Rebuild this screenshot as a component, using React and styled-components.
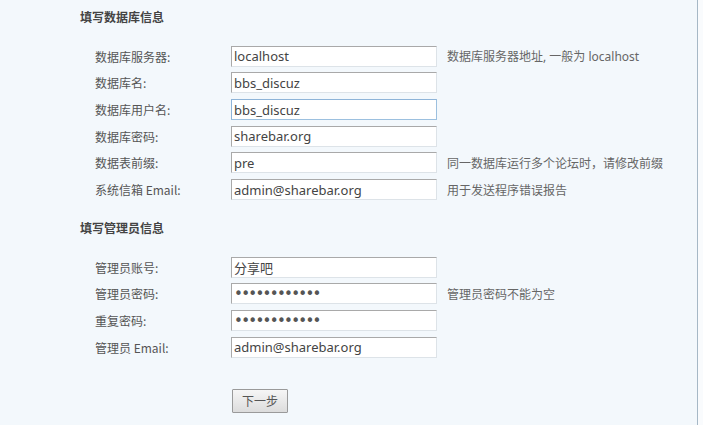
import React from 'react'
import styled, { createGlobalStyle } from 'styled-components'

const Global = createGlobalStyle`
  html, body {
    margin: 0;
    padding: 0;
    background: #f9fbfd;
  }
  body {
    font-family: "Noto Sans", "Noto Sans CJK SC", sans-serif;
    font-size: 12px;
    color: #555;
  }
`

const Page = styled.div`
  width: 698px;
  height: 425px;
  background: #f3f8fc;
  border-right: 1px solid #a6b8c6;
  box-sizing: border-box;
  padding-top: 8px;
`

const Title = styled.h3`
  margin: ${props => props.first ? '0' : '16px'} 0 0 80px;
  font-size: 12px;
  line-height: 20px;
  font-weight: bold;
  color: #444;
`

const Form = styled.div`
  display: grid;
  grid-template-columns: 126px 206px auto;
  grid-auto-rows: 26.67px;
  column-gap: 10px;
  align-items: center;
  padding-left: 95px;
  margin-top: 15px;
`

const Label = styled.label`
  font-family: "Noto Sans CJK SC", sans-serif;
  font-size: 12px;
  color: #555;
  white-space: nowrap;
`

const Input = styled.input`
  box-sizing: border-box;
  width: 206px;
  height: 21px;
  margin: 0;
  padding: 0 2px;
  background: #fff;
  border: 1px solid;
  border-color: ${props => props.active
    ? '#8eb4d8 #9cc0df #9cc0df #8eb4d8'
    : '#a9a9a9 #dde3e8 #dde3e8 #a9a9a9'};
  font-family: "Noto Sans", "Noto Sans CJK SC", sans-serif;
  font-size: 13px;
  color: #444;
  outline: none;

  &[type="password"] {
    font-family: "DejaVu Sans", sans-serif;
    font-size: 15px;
    letter-spacing: -1.7px;
    color: #555;
  }
`

const Hint = styled.span`
  font-family: "Noto Sans", "Noto Sans CJK SC", sans-serif;
  font-size: 12px;
  color: #666;
  white-space: nowrap;
`

const Actions = styled.div`
  padding-left: 232px;
  margin-top: 28px;
`

const Button = styled.button`
  width: 56px;
  height: 24px;
  padding: 0;
  border: 1px solid #9a9a9a;
  border-radius: 1px;
  background: linear-gradient(#f6f6f6, #dcdcdc);
  font-family: "Noto Sans CJK SC", sans-serif;
  font-size: 12px;
  color: #555;
`

const dbRows = [
  { label: '数据库服务器:', value: 'localhost', hint: '数据库服务器地址, 一般为 localhost' },
  { label: '数据库名:', value: 'bbs_discuz' },
  { label: '数据库用户名:', value: 'bbs_discuz', active: true },
  { label: '数据库密码:', value: 'sharebar.org' },
  { label: '数据表前缀:', value: 'pre', hint: '同一数据库运行多个论坛时，请修改前缀' },
  { label: '系统信箱 Email:', value: 'admin@sharebar.org', hint: '用于发送程序错误报告' },
]

const adminRows = [
  { label: '管理员账号:', value: '分享吧' },
  { label: '管理员密码:', value: 'sharebar.org', type: 'password', hint: '管理员密码不能为空' },
  { label: '重复密码:', value: 'sharebar.org', type: 'password' },
  { label: '管理员 Email:', value: 'admin@sharebar.org' },
]

const Rows = ({ rows }) => (
  <Form>
    {rows.map(r => (
      <React.Fragment key={r.label}>
        <Label>{r.label}</Label>
        <Input type={r.type || 'text'} defaultValue={r.value} active={r.active ? 1 : 0} />
        <Hint>{r.hint || ''}</Hint>
      </React.Fragment>
    ))}
  </Form>
)

const App = () => {
  return (
    <Page>
      <Global />
      <Title first>填写数据库信息</Title>
      <Rows rows={dbRows} />
      <Title>填写管理员信息</Title>
      <Rows rows={adminRows} />
      <Actions>
        <Button>下一步</Button>
      </Actions>
    </Page>
  )
}

export default App
